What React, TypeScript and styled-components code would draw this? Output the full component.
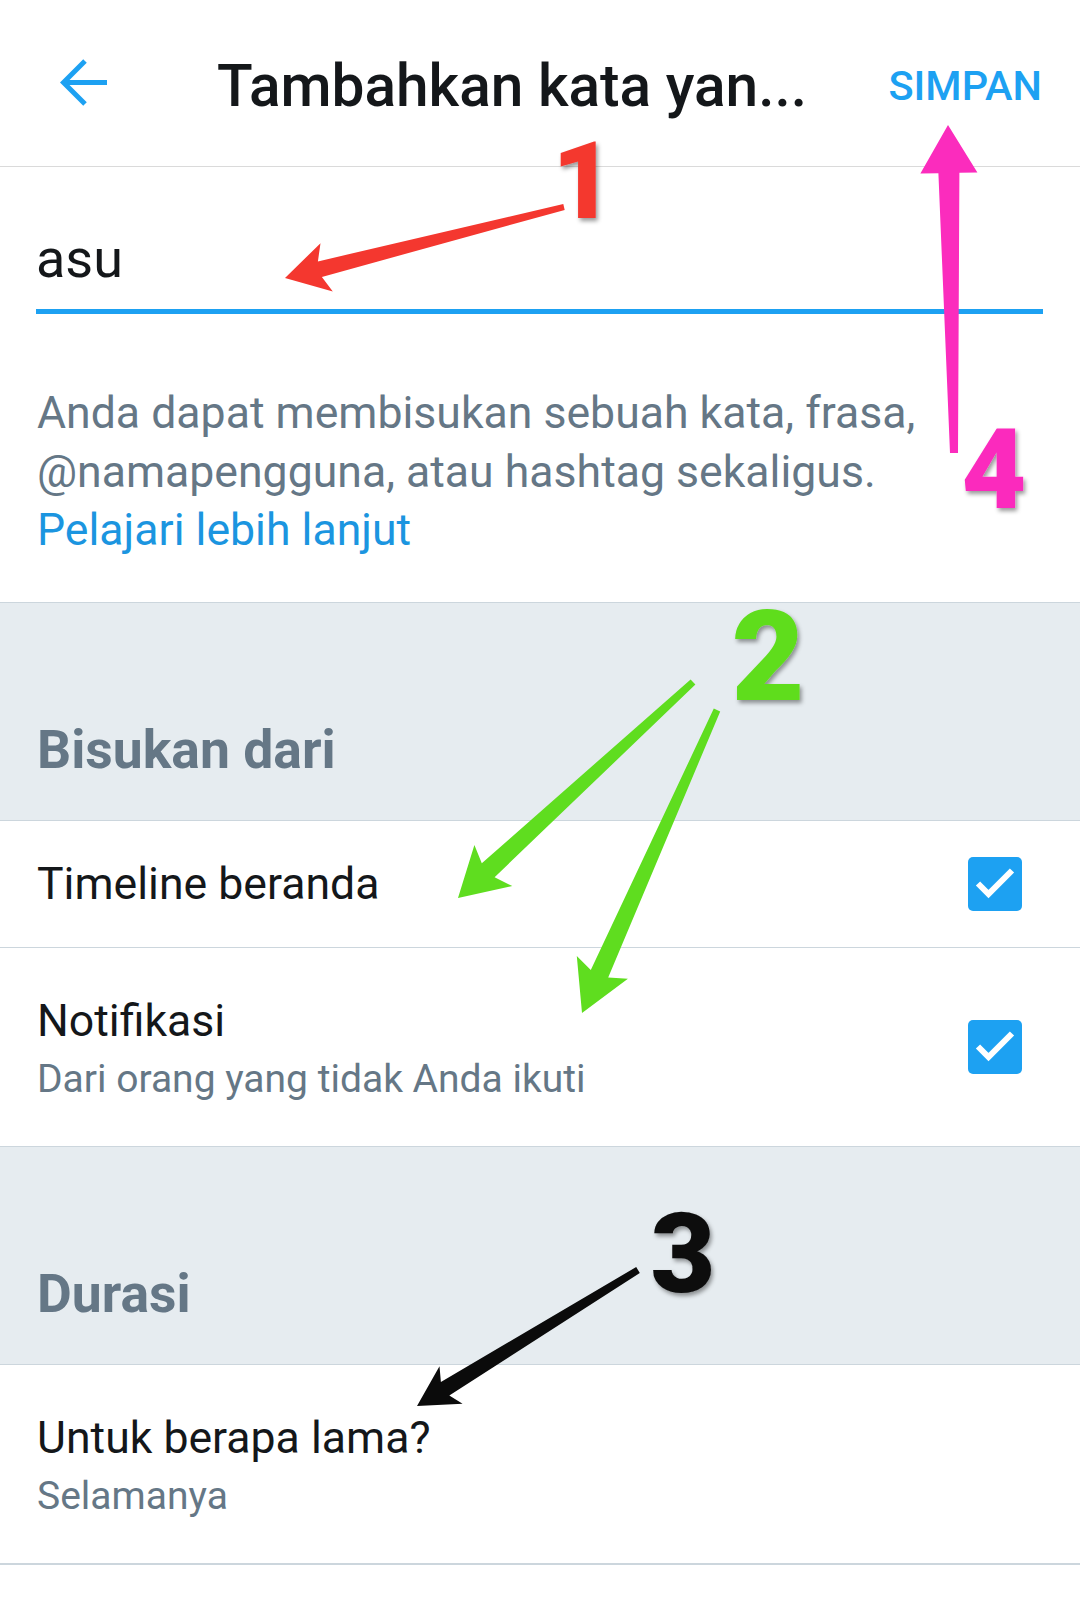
import React from "react";
import styled, { createGlobalStyle } from "styled-components";

const GlobalStyle = createGlobalStyle`
  html, body { margin: 0; padding: 0; background: #ffffff; }
  body {
    font-family: Roboto, "Noto Sans", "Liberation Sans", sans-serif;
    -webkit-font-smoothing: antialiased;
  }
  * { box-sizing: border-box; }
`;

const BLUE = "#1da1f2";
const INK = "#14171a";
const MUTED = "#657786";
const RULE = "#ccd6dd";

const Screen = styled.div`
  position: relative;
  width: 1080px;
  min-height: 1618px;
  background: #ffffff;
  overflow: hidden;
`;

/* ---------- toolbar ---------- */

const Toolbar = styled.header`
  display: flex;
  align-items: center;
  height: 167px;
  padding: 5px 38px 0 60px;
  border-bottom: 1px solid #dadada;
`;

const BackButton = styled.button`
  display: flex;
  width: 48px;
  height: 48px;
  margin: 0 109px 5px 0;
  padding: 0;
  border: 0;
  background: none;
  cursor: pointer;
`;

const Title = styled.h1`
  flex: 1;
  margin: 0;
  font-size: 58.6px;
  font-weight: 500;
  line-height: normal;
  color: ${INK};
  white-space: nowrap;
  overflow: hidden;
`;

const SaveButton = styled.button`
  padding: 0;
  border: 0;
  background: none;
  font-family: inherit;
  font-size: 41.5px;
  font-weight: 500;
  line-height: normal;
  color: ${BLUE};
  cursor: pointer;
`;

/* ---------- keyword field ---------- */

const Field = styled.label`
  display: block;
  margin: 61px 37px 0 36px;
  padding-bottom: 20px;
  border-bottom: 5px solid ${BLUE};
`;

const KeywordInput = styled.input`
  display: block;
  width: 100%;
  height: 61px;
  padding: 0;
  border: 0;
  outline: none;
  background: transparent;
  font-family: inherit;
  font-size: 54px;
  color: ${INK};
`;

const Help = styled.p`
  margin: 70px 36px 42px 37px;
  font-size: 44.6px;
  line-height: 58.5px;
  color: ${MUTED};
`;

const HelpLink = styled.a`
  display: block;
  color: #1b95e0;
  text-decoration: none;
`;

/* ---------- grouped settings ---------- */

const GroupHeader = styled.h2`
  margin: 0;
  padding: 116px 37px 39px;
  border-top: 1px solid ${RULE};
  border-bottom: 1px solid ${RULE};
  background: #e6ecf0;
  font-size: 53.5px;
  font-weight: 700;
  line-height: 62px;
  color: ${MUTED};
`;

const List = styled.div<{ $closed?: boolean }>`
  display: flex;
  flex-direction: column;
  border-bottom: ${(p) => (p.$closed ? `2px solid ${RULE}` : "none")};
`;

const Row = styled.div<{ $tall?: boolean }>`
  box-sizing: content-box;
  display: flex;
  align-items: center;
  justify-content: space-between;
  height: ${(p) => (p.$tall ? 198 : 126)}px;
  padding: 0 58px 0 37px;

  & + & {
    border-top: 1px solid ${RULE};
  }
`;

const TextStack = styled.div<{ $tall?: boolean }>`
  display: flex;
  flex-direction: column;
  gap: 9px;
  padding-top: ${(p) => (p.$tall ? 4 : 2)}px;
`;

const RowTitle = styled.span`
  font-size: 44.6px;
  line-height: 53px;
  color: ${INK};
`;

const RowSub = styled.span`
  font-size: 39px;
  line-height: 44.5px;
  color: ${MUTED};
`;

const Box = styled.span`
  display: flex;
  width: 54px;
  height: 54px;
  border-radius: 5px;
  background: ${BLUE};
`;

/* ---------- callout layer ---------- */

const Callouts = styled.svg`
  position: absolute;
  left: 0;
  top: 0;
  width: 1080px;
  height: 1618px;
  pointer-events: none;
`;

const Digit = styled.text`
  font-family: Roboto, "DejaVu Sans", sans-serif;
  font-weight: 900;
`;

type Pt = [number, number];

interface ArrowShape {
  tail: Pt;
  tip: Pt;
  headBack: number;
  headHalf: number;
  neckBack: number;
  neckHalf: number;
  tailHalf: number;
  color: string;
}

function arrowPath(a: ArrowShape): string {
  const dx = a.tip[0] - a.tail[0];
  const dy = a.tip[1] - a.tail[1];
  const len = Math.hypot(dx, dy);
  const ux = dx / len;
  const uy = dy / len;
  const nx = -uy;
  const ny = ux;
  const fromTip = (back: number, side: number): Pt => [
    a.tip[0] - ux * back + nx * side,
    a.tip[1] - uy * back + ny * side,
  ];
  const fromTail = (side: number): Pt => [a.tail[0] + nx * side, a.tail[1] + ny * side];
  const pts: Pt[] = [
    a.tip,
    fromTip(a.headBack, a.headHalf),
    fromTip(a.neckBack, a.neckHalf),
    fromTail(a.tailHalf),
    fromTail(-a.tailHalf),
    fromTip(a.neckBack, -a.neckHalf),
    fromTip(a.headBack, -a.headHalf),
  ];
  return pts.map((p) => `${p[0].toFixed(1)},${p[1].toFixed(1)}`).join(" ");
}

const arrows: ArrowShape[] = [
  { tail: [564, 207], tip: [285, 278], headBack: 43, headHalf: 25, neckBack: 36, neckHalf: 8, tailHalf: 3, color: "#f4372f" },
  { tail: [954, 453], tip: [948, 125], headBack: 48, headHalf: 28.5, neckBack: 48, neckHalf: 10.5, tailHalf: 4, color: "#fb2cbd" },
  { tail: [693, 682], tip: [458, 898], headBack: 48, headHalf: 28, neckBack: 41, neckHalf: 9.5, tailHalf: 3.5, color: "#5fdd1f" },
  { tail: [717, 710], tip: [582, 1013], headBack: 50, headHalf: 28, neckBack: 43, neckHalf: 9.5, tailHalf: 3.5, color: "#5fdd1f" },
  { tail: [638, 1270], tip: [417, 1406], headBack: 40, headHalf: 22, neckBack: 33, neckHalf: 8, tailHalf: 3.5, color: "#0b0b0b" },
];

const digits = [
  { label: "1", x: 583, y: 218, size: 107, color: "#f4372f" },
  { label: "4", x: 994, y: 508, size: 112, color: "#fb2cbd" },
  { label: "2", x: 768, y: 700, size: 126, color: "#5fdd1f" },
  { label: "3", x: 683, y: 1292, size: 112, color: "#0b0b0b" },
];

function BackArrow() {
  return (
    <svg width="48" height="48" viewBox="0 0 48 48" fill="none">
      <path d="M3 23.5H47" stroke={BLUE} strokeWidth="5" />
      <path d="M25 2L3.5 23.5L25 45" stroke={BLUE} strokeWidth="5" />
    </svg>
  );
}

function Checkbox() {
  return (
    <Box role="checkbox" aria-checked="true">
      <svg width="54" height="54" viewBox="0 0 54 54" fill="none">
        <path d="M10 26.5L20.5 37L44 13.5" stroke="#ffffff" strokeWidth="6" />
      </svg>
    </Box>
  );
}

function SettingRow({ title, sub, checked }: { title: string; sub?: string; checked?: boolean }) {
  const tall = Boolean(sub);
  return (
    <Row $tall={tall}>
      <TextStack $tall={tall}>
        <RowTitle>{title}</RowTitle>
        {sub && <RowSub>{sub}</RowSub>}
      </TextStack>
      {checked && <Checkbox />}
    </Row>
  );
}

export default function App() {
  return (
    <Screen>
      <GlobalStyle />
      <Toolbar>
        <BackButton aria-label="Kembali">
          <BackArrow />
        </BackButton>
        <Title>Tambahkan kata yan...</Title>
        <SaveButton>SIMPAN</SaveButton>
      </Toolbar>

      <Field>
        <KeywordInput defaultValue="asu" readOnly />
      </Field>

      <Help>
        Anda dapat membisukan sebuah kata, frasa, @namapengguna, atau hashtag sekaligus.
        <HelpLink href="#">Pelajari lebih lanjut</HelpLink>
      </Help>

      <GroupHeader>Bisukan dari</GroupHeader>
      <List>
        <SettingRow title="Timeline beranda" checked />
        <SettingRow title="Notifikasi" sub="Dari orang yang tidak Anda ikuti" checked />
      </List>

      <GroupHeader>Durasi</GroupHeader>
      <List $closed>
        <SettingRow title="Untuk berapa lama?" sub="Selamanya" />
      </List>

      <Callouts viewBox="0 0 1080 1618">
        <defs>
          <filter id="digit-shadow" x="-30%" y="-30%" width="160%" height="160%">
            <feDropShadow dx="2" dy="3" stdDeviation="2" floodColor="#000" floodOpacity="0.4" />
          </filter>
        </defs>
        {arrows.map((a, i) => (
          <polygon key={i} points={arrowPath(a)} fill={a.color} />
        ))}
        {digits.map((d) => (
          <Digit
            key={d.label}
            x={d.x}
            y={d.y}
            fontSize={d.size}
            fill={d.color}
            textAnchor="middle"
            filter="url(#digit-shadow)"
          >
            {d.label}
          </Digit>
        ))}
      </Callouts>
    </Screen>
  );
}
